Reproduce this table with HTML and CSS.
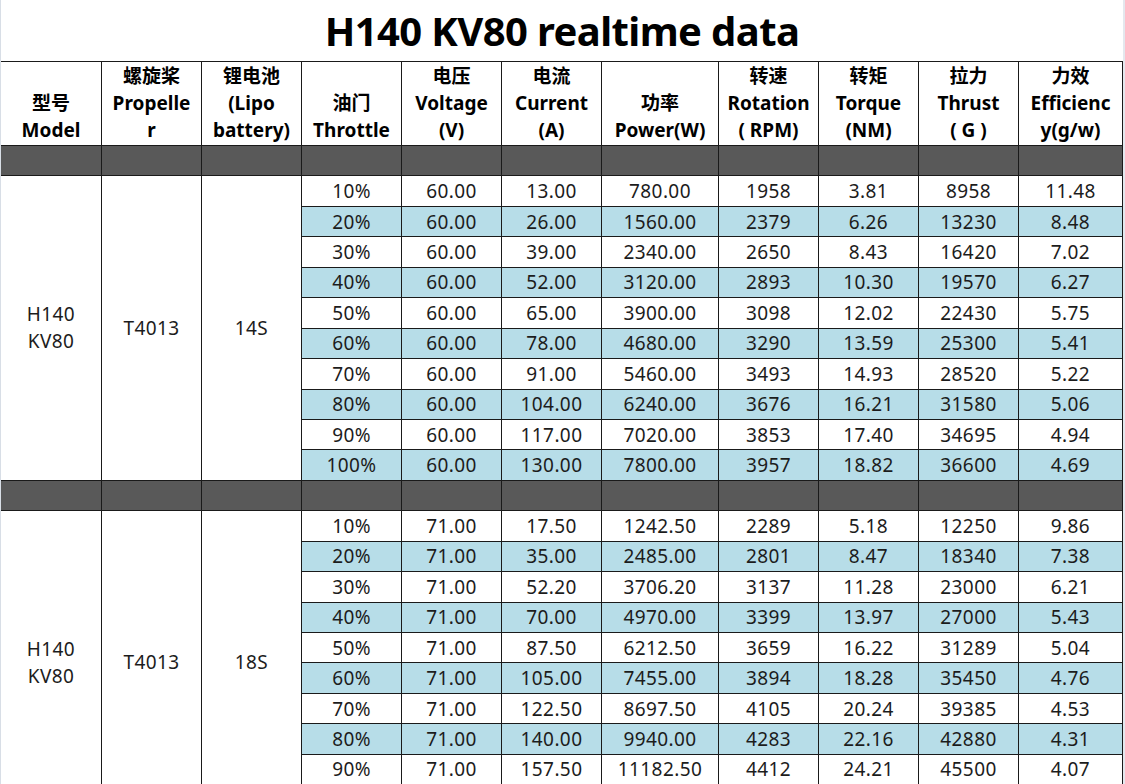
FILE: index.html
```html
<!DOCTYPE html>
<html lang="zh">
<head>
<meta charset="utf-8">
<title>H140 KV80 realtime data</title>
<link rel="stylesheet" href="styles.css">
</head>
<body>
<div class="page">
  <h1 class="title">H140 KV80 realtime data</h1>
  <table class="data">
    <colgroup>
      <col class="c-model"><col class="c-std"><col class="c-std"><col class="c-std"><col class="c-std"><col class="c-std"><col class="c-power"><col class="c-std"><col class="c-std"><col class="c-std"><col class="c-eff">
    </colgroup>
    <thead>
      <tr class="head">
        <th class="first">型号<br>Model</th>
        <th>螺旋桨<br>Propelle<br>r</th>
        <th>锂电池<br>(Lipo<br>battery)</th>
        <th>油门<br>Throttle</th>
        <th>电压<br>Voltage<br>(V)</th>
        <th>电流<br>Current<br>(A)</th>
        <th>功率<br>Power(W)</th>
        <th>转速<br>Rotation<br>( RPM)</th>
        <th>转矩<br>Torque<br>(NM)</th>
        <th>拉力<br>Thrust<br>( G )</th>
        <th>力效<br>Efficienc<br>y(g/w)</th>
      </tr>
    </thead>
    <tbody>
      <tr class="sep"><td class="first"></td><td></td><td></td><td></td><td></td><td></td><td></td><td></td><td></td><td></td><td></td></tr>
      <tr><td class="first merged" rowspan="10">H140<br>KV80</td><td class="merged" rowspan="10">T4013</td><td class="merged" rowspan="10">14S</td><td>10%</td><td>60.00</td><td>13.00</td><td>780.00</td><td>1958</td><td>3.81</td><td>8958</td><td>11.48</td></tr>
      <tr class="alt"><td>20%</td><td>60.00</td><td>26.00</td><td>1560.00</td><td>2379</td><td>6.26</td><td>13230</td><td>8.48</td></tr>
      <tr><td>30%</td><td>60.00</td><td>39.00</td><td>2340.00</td><td>2650</td><td>8.43</td><td>16420</td><td>7.02</td></tr>
      <tr class="alt"><td>40%</td><td>60.00</td><td>52.00</td><td>3120.00</td><td>2893</td><td>10.30</td><td>19570</td><td>6.27</td></tr>
      <tr><td>50%</td><td>60.00</td><td>65.00</td><td>3900.00</td><td>3098</td><td>12.02</td><td>22430</td><td>5.75</td></tr>
      <tr class="alt"><td>60%</td><td>60.00</td><td>78.00</td><td>4680.00</td><td>3290</td><td>13.59</td><td>25300</td><td>5.41</td></tr>
      <tr><td>70%</td><td>60.00</td><td>91.00</td><td>5460.00</td><td>3493</td><td>14.93</td><td>28520</td><td>5.22</td></tr>
      <tr class="alt"><td>80%</td><td>60.00</td><td>104.00</td><td>6240.00</td><td>3676</td><td>16.21</td><td>31580</td><td>5.06</td></tr>
      <tr><td>90%</td><td>60.00</td><td>117.00</td><td>7020.00</td><td>3853</td><td>17.40</td><td>34695</td><td>4.94</td></tr>
      <tr class="alt"><td>100%</td><td>60.00</td><td>130.00</td><td>7800.00</td><td>3957</td><td>18.82</td><td>36600</td><td>4.69</td></tr>
      <tr class="sep"><td class="first"></td><td></td><td></td><td></td><td></td><td></td><td></td><td></td><td></td><td></td><td></td></tr>
      <tr><td class="first merged" rowspan="10">H140<br>KV80</td><td class="merged" rowspan="10">T4013</td><td class="merged" rowspan="10">18S</td><td>10%</td><td>71.00</td><td>17.50</td><td>1242.50</td><td>2289</td><td>5.18</td><td>12250</td><td>9.86</td></tr>
      <tr class="alt"><td>20%</td><td>71.00</td><td>35.00</td><td>2485.00</td><td>2801</td><td>8.47</td><td>18340</td><td>7.38</td></tr>
      <tr><td>30%</td><td>71.00</td><td>52.20</td><td>3706.20</td><td>3137</td><td>11.28</td><td>23000</td><td>6.21</td></tr>
      <tr class="alt"><td>40%</td><td>71.00</td><td>70.00</td><td>4970.00</td><td>3399</td><td>13.97</td><td>27000</td><td>5.43</td></tr>
      <tr><td>50%</td><td>71.00</td><td>87.50</td><td>6212.50</td><td>3659</td><td>16.22</td><td>31289</td><td>5.04</td></tr>
      <tr class="alt"><td>60%</td><td>71.00</td><td>105.00</td><td>7455.00</td><td>3894</td><td>18.28</td><td>35450</td><td>4.76</td></tr>
      <tr><td>70%</td><td>71.00</td><td>122.50</td><td>8697.50</td><td>4105</td><td>20.24</td><td>39385</td><td>4.53</td></tr>
      <tr class="alt"><td>80%</td><td>71.00</td><td>140.00</td><td>9940.00</td><td>4283</td><td>22.16</td><td>42880</td><td>4.31</td></tr>
      <tr><td>90%</td><td>71.00</td><td>157.50</td><td>11182.50</td><td>4412</td><td>24.21</td><td>45500</td><td>4.07</td></tr>
      <tr class="alt"><td>100%</td><td></td><td></td><td></td><td></td><td></td><td></td><td></td></tr>
    </tbody>
  </table>
</div>
</body>
</html>
```
FILE: styles.css
```css
html, body {
  margin: 0;
  padding: 0;
  background: #ffffff;
}

.page {
  width: 1125px;
  height: 784px;
  overflow: hidden;
  box-sizing: border-box;
  border-left: 1px solid #d8dee6;
  border-right: 2px solid #e4e8ee;
  font-family: "Noto Sans", "Noto Sans CJK SC", sans-serif;
  color: #1c1c1c;
}

.title {
  margin: 0;
  height: 61px;
  box-sizing: border-box;
  padding-top: 1px;
  line-height: 60px;
  font-size: 40px;
  font-weight: 700;
  text-align: center;
  color: #000;
  letter-spacing: -0.6px;
}

.data {
  width: 1122px;
  margin-left: -1px;
  border-collapse: collapse;
  table-layout: fixed;
  font-size: 19px;
}

.c-model { width: 101px; }
.c-std { width: 100px; }
.c-power { width: 117px; }
.c-eff { width: 104px; }

.data th,
.data td {
  border: 1px solid #1a1a1a;
  padding: 0;
  text-align: center;
  white-space: nowrap;
}

.data .first {
  border-left-color: transparent;
}

.head th {
  height: 84px;
  box-sizing: border-box;
  vertical-align: bottom;
  padding-bottom: 1px;
  font-weight: 700;
  line-height: 27px;
  font-size: 19px;
  color: #000;
}

.sep td {
  height: 31px;
  box-sizing: border-box;
  background: #595959;
}

.data tbody td {
  height: 30.45px;
  box-sizing: border-box;
  line-height: 22px;
  letter-spacing: 0.4px;
}

.data td.merged {
  background: #ffffff;
  vertical-align: middle;
  line-height: 27px;
}

.alt td {
  background: #b7dde8;
}
```
